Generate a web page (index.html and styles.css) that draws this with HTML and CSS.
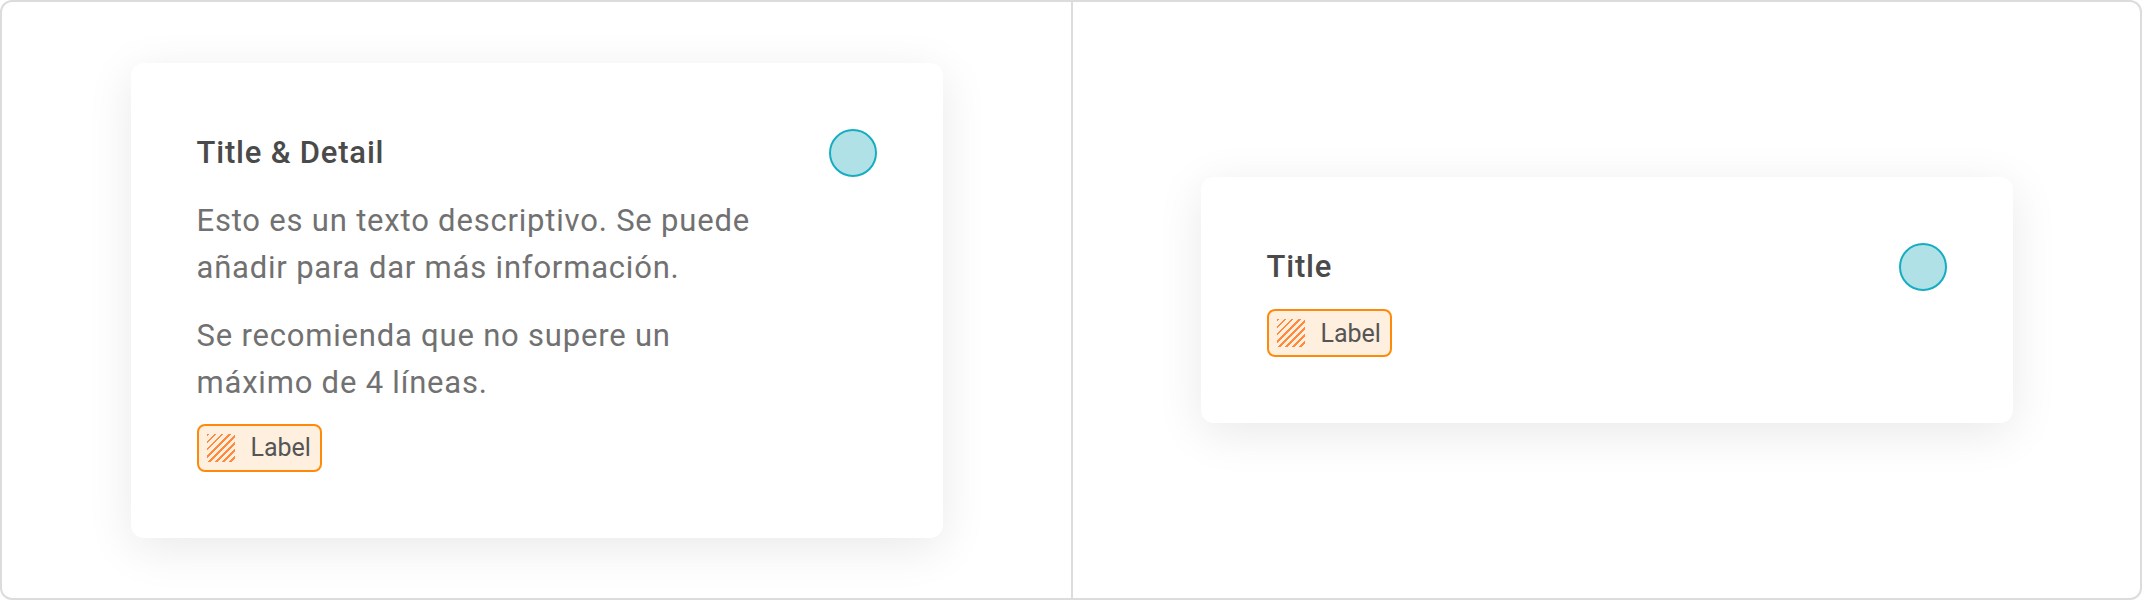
FILE: index.html
```html
<!DOCTYPE html>
<html lang="es">
<head>
  <meta charset="UTF-8">
  <title>Cards | Title & Detail</title>
  <meta name="viewport" content="width=device-width, initial-scale=1.0" />
  <link rel="stylesheet" href="styles.css">
</head>
<body>
  <div class="frame">
    <div class="panel">
      <div class="card">
        <div class="card-head">
          <h3 class="card-title">Title &amp; Detail</h3>
          <span class="dot"></span>
        </div>
        <p class="card-text first">Esto es un texto descriptivo. Se puede añadir para dar más información.</p>
        <p class="card-text">Se recomienda que no supere un máximo de 4 líneas.</p>
        <span class="tag"><span class="tag-icon"></span>Label</span>
      </div>
    </div>

    <div class="panel divided">
      <div class="card">
        <div class="card-head">
          <h3 class="card-title">Title</h3>
          <span class="dot"></span>
        </div>
        <span class="tag"><span class="tag-icon"></span>Label</span>
      </div>
    </div>
  </div>
</body>
</html>
```

FILE: styles.css
```css
body {
  font-family: Roboto, 'Noto Sans', sans-serif;
  background: #fff;
  margin: 0;
  color: #444;
}

.frame {
  box-sizing: border-box;
  width: 2142px;
  height: 600px;
  border: 2px solid #dcdcdc;
  border-radius: 12px;
  display: grid;
  grid-template-columns: 1fr 1fr;
  overflow: hidden;
}

.panel {
  display: flex;
  align-items: center;
  justify-content: center;
}

.divided {
  border-left: 2px solid #dcdcdc;
}

.card {
  box-sizing: border-box;
  width: 812px;
  padding: 66px;
  background: white;
  border-radius: 13px;
  box-shadow: 0 10px 48px rgba(0, 0, 0, 0.09);
  display: flex;
  flex-direction: column;
  align-items: flex-start;
}

.card-head {
  width: 100%;
  display: flex;
  align-items: center;
  justify-content: space-between;
}

.card-title {
  margin: 0;
  font-size: 31px;
  font-weight: 500;
  letter-spacing: 0.8px;
  color: #4a4a4a;
  line-height: 36px;
}

.dot {
  box-sizing: border-box;
  width: 48px;
  height: 48px;
  border-radius: 50%;
  background: #b0e1e6;
  border: 2px solid #16adc3;
  flex-shrink: 0;
}

.card-text {
  max-width: 566px;
  margin: 21px 0 0;
  font-size: 31px;
  letter-spacing: 0.8px;
  line-height: 47px;
  color: #717171;
}

.card-text.first {
  margin-top: 20px;
}

.tag {
  box-sizing: border-box;
  height: 48px;
  margin-top: 18px;
  padding: 0 9px 0 8px;
  display: inline-flex;
  align-items: center;
  gap: 16px;
  background: #ffefdf;
  border: 2px solid #ff8a0a;
  border-radius: 8px;
  font-size: 25px;
  color: #555;
}

.tag-icon {
  width: 28px;
  height: 28px;
  background: repeating-linear-gradient(135deg, #ff8a3d 0 2px, transparent 2px 5px);
}
```
